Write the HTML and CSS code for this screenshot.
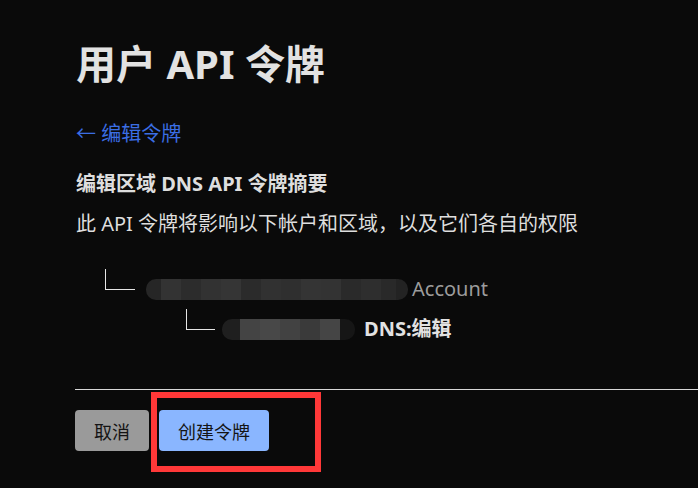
FILE: index.html
```html
<!DOCTYPE html>
<html lang="zh-CN">
<head>
    <meta charset="UTF-8">
    <meta name="viewport" content="width=device-width, initial-scale=1.0">
    <title>用户 API 令牌</title>
    <link rel="stylesheet" href="styles.css">
</head>
<body>
    <div class="page">
        <h1 class="page-title">用户 API 令牌</h1>
        <a class="back-link" href="#">&larr; 编辑令牌</a>

        <h2 class="summary-title">编辑区域 DNS API 令牌摘要</h2>
        <p class="summary-desc">此 API 令牌将影响以下帐户和区域，以及它们各自的权限</p>

        <div class="tree">
            <div class="tree-row level-1">
                <span class="tree-branch"></span>
                <span class="masked masked-account"></span>
                <span class="account-label">Account</span>
            </div>
            <div class="tree-row level-2">
                <span class="tree-branch"></span>
                <span class="masked masked-zone"></span>
                <span class="perm-label">DNS:编辑</span>
            </div>
        </div>

        <hr class="divider">

        <div class="actions">
            <button class="btn btn-cancel">取消</button>
            <button class="btn btn-primary">创建令牌</button>
            <div class="highlight-box"></div>
        </div>
    </div>
</body>
</html>
```

FILE: styles.css
```css
html, body {
    margin: 0;
    padding: 0;
    background-color: #0a0a0a;
}

body {
    color: #dedede;
    font-family: "Noto Sans", "Noto Sans CJK SC", sans-serif;
}

.page {
    min-height: 488px;
    padding-left: 76px;
    box-sizing: border-box;
    overflow: hidden;
}

.page-title {
    margin: 40px 0 0;
    font-size: 40px;
    line-height: 48px;
    font-weight: 700;
    color: #e2e2e2;
}

.back-link {
    display: block;
    margin-top: 32px;
    font-size: 20px;
    line-height: 28px;
    color: #3b6ee4;
    text-decoration: none;
}

.summary-title {
    margin: 22px 0 0;
    font-size: 20px;
    line-height: 28px;
    font-weight: 700;
    color: #dedede;
}

.summary-desc {
    margin: 12px 0 0;
    font-size: 20px;
    line-height: 28px;
    color: #dedede;
}

.tree {
    margin-top: 31px;
}

.tree-row {
    display: flex;
    align-items: center;
    height: 40px;
}

.tree-branch {
    height: 20px;
    margin-bottom: 20px;
    border-left: 1px solid #e6e6e6;
    border-bottom: 1px solid #e6e6e6;
}

.level-1 {
    padding-left: 29px;
}

.level-1 .tree-branch {
    width: 29px;
    margin-right: 11px;
}

.level-2 {
    padding-left: 110px;
}

.level-2 .tree-branch {
    width: 28px;
    margin-right: 7px;
}

.masked {
    height: 21px;
    border-radius: 10px;
    filter: blur(0.6px);
}

.masked-account {
    width: 262px;
    margin-right: 4px;
    background: linear-gradient(90deg,
        #262626 0 15px, #333 15px 35px, #2c2c2c 35px 55px, #323232 55px 75px,
        #353535 75px 95px, #2b2b2b 95px 115px, #313131 115px 135px, #2f2f2f 135px 155px,
        #343434 155px 175px, #333 175px 195px, #2a2a2a 195px 215px, #2e2e2e 215px 235px,
        #292929 235px 250px, #232323 250px);
}

.masked-zone {
    width: 133px;
    margin-right: 9px;
    background: linear-gradient(90deg,
        #1f1f1f 0 18px, #444 18px 38px, #484848 38px 58px, #424242 58px 78px,
        #3a3a3a 78px 98px, #454545 98px 118px, #161616 118px);
}

.account-label {
    font-size: 20px;
    line-height: 28px;
    color: #9c9c9c;
}

.perm-label {
    font-size: 20px;
    line-height: 28px;
    font-weight: 700;
    color: #e2e2e2;
}

.divider {
    margin: 40px 0 0 -1px;
    border: none;
    border-top: 1px solid #d8d8d8;
    height: 0;
}

.actions {
    position: relative;
    display: flex;
    gap: 10px;
    margin-top: 20px;
    margin-left: -1px;
}

.btn {
    height: 41px;
    padding: 0 19px;
    border: none;
    border-radius: 4px;
    font-family: "Noto Sans CJK SC", sans-serif;
    font-size: 18px;
    color: #141414;
    cursor: pointer;
}

.btn-cancel {
    background-color: #9a9a9a;
}

.btn-primary {
    background-color: #8ab6ff;
}

.highlight-box {
    position: absolute;
    left: 76px;
    top: -18px;
    width: 158px;
    height: 68px;
    border: 6px solid #ff3838;
    pointer-events: none;
}
```
